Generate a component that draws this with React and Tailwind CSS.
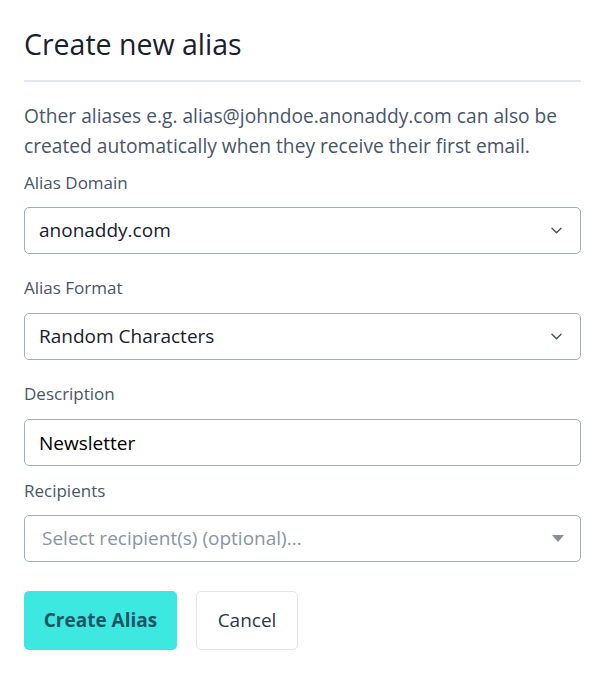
import { useState } from "react";

const Chevron = () => (
  <svg width="15" height="15" viewBox="0 0 20 20" fill="none" stroke="#4a5568" strokeWidth="2" strokeLinecap="round" strokeLinejoin="round">
    <path d="M4 7l6 6 6-6" />
  </svg>
);

function Label({ children }) {
  return <div className="text-[17px] leading-6 text-[#4a5568]">{children}</div>;
}

export default function App() {
  const [desc, setDesc] = useState("Newsletter");

  return (
    <div className="min-h-screen bg-white pl-6 pr-[25px] pt-[26px] pb-6" style={{ fontFamily: '"Open Sans", sans-serif' }}>
      <h2 className="text-[28.5px] leading-9 text-[#1a202c] pb-[18px] border-b-2 border-[#e2e8f0]">Create new alias</h2>

      <p className="mt-[19px] text-[19.2px] leading-[30px] text-[#4a5568]">
        Other aliases e.g. alias@johndoe.anonaddy.com can also be created automatically when they receive their first email.
      </p>

      <div className="mt-[10px]">
        <Label>Alias Domain</Label>
        <div className="mt-[12px] h-[47px] flex items-center justify-between px-[14px] border border-[#a0aec0] rounded-[5px] text-[19px] text-[#1a202c]">
          <span>anonaddy.com</span>
          <span className="pr-[2px]"><Chevron /></span>
        </div>
      </div>

      <div className="mt-[22px]">
        <Label>Alias Format</Label>
        <div className="mt-[13px] h-[47px] flex items-center justify-between px-[14px] border border-[#a0aec0] rounded-[5px] text-[19px] text-[#1a202c]">
          <span>Random Characters</span>
          <span className="pr-[2px]"><Chevron /></span>
        </div>
      </div>

      <div className="mt-[22px]">
        <Label>Description</Label>
        <input
          value={desc}
          onChange={(e) => setDesc(e.target.value)}
          className="mt-[13px] w-full h-[47px] px-[14px] border border-[#a0aec0] rounded-[5px] text-[19px] text-black outline-none"
        />
      </div>

      <div className="mt-[13px]">
        <Label>Recipients</Label>
        <div className="mt-[12px] h-[47px] flex items-center justify-between pl-[17px] pr-[16px] border border-[#a0aec0] rounded-[5px] text-[19px] text-[#8a94a3]">
          <span>Select recipient(s) (optional)...</span>
          <svg width="12" height="7" viewBox="0 0 12 7"><path d="M0 0h12L6 7z" fill="#8a8f96" /></svg>
        </div>
      </div>

      <div className="mt-[29px] flex gap-[19px]">
        <button className="h-[59px] w-[153px] rounded-[5px] bg-[#3ce8e0] text-[#1d5566] text-[19px] font-bold">Create Alias</button>
        <button className="h-[59px] w-[102px] rounded-[5px] border border-[#e2e8f0] bg-white text-[#2d3748] text-[19px]">Cancel</button>
      </div>
    </div>
  );
}
